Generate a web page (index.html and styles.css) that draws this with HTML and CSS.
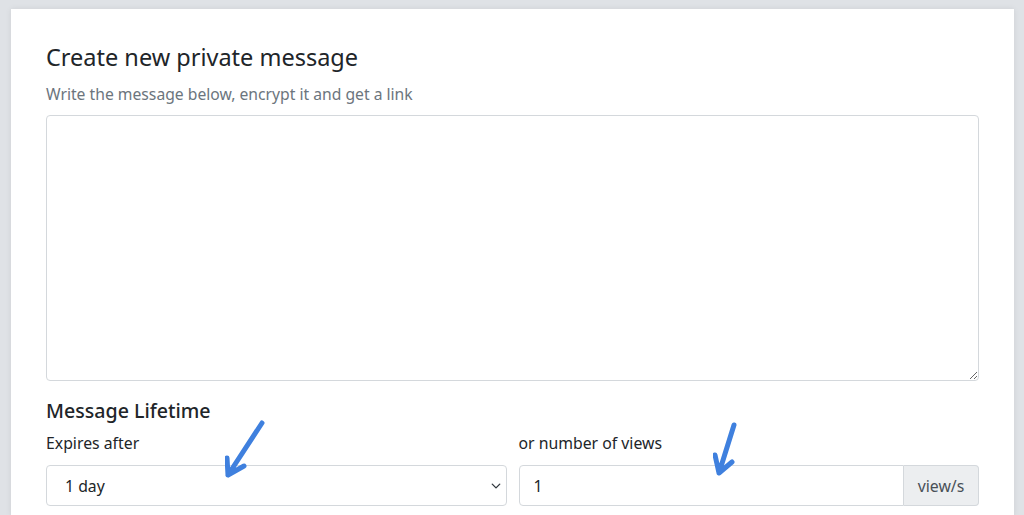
FILE: index.html
```html
<!DOCTYPE html>
<html lang="en">
<head>
    <meta charset="UTF-8">
    <meta name="viewport" content="width=device-width, initial-scale=1.0">
    <title>Create new private message</title>
    <link rel="stylesheet" href="styles.css">
</head>
<body>
    <div class="card">
        <h1>Create new private message</h1>
        <p class="lead">Write the message below, encrypt it and get a link</p>

        <textarea class="message" aria-label="Message"></textarea>

        <h2>Message Lifetime</h2>
        <div class="row">
            <div class="form-group">
                <label for="expires">Expires after</label>
                <div class="field">
                    <select id="expires">
                        <option>1 day</option>
                        <option>1 hour</option>
                        <option>1 week</option>
                    </select>
                    <svg class="arrow arrow-left" width="40" height="60" viewBox="0 0 40 60">
                        <path d="M37 3 L3 55 M2 38 L3 55 L19 46" fill="none" stroke="#3f80de" stroke-width="5" stroke-linecap="round" stroke-linejoin="round"/>
                    </svg>
                </div>
            </div>
            <div class="form-group">
                <label for="views">or number of views</label>
                <div class="field input-group">
                    <input type="number" id="views" value="1">
                    <span class="addon">view/s</span>
                    <svg class="arrow arrow-right" width="30" height="56" viewBox="0 0 30 56">
                        <path d="M21 3 L6 51 M2 33 L6 51 L19 40" fill="none" stroke="#3f80de" stroke-width="5" stroke-linecap="round" stroke-linejoin="round"/>
                    </svg>
                </div>
            </div>
        </div>
    </div>
</body>
</html>
```

FILE: styles.css
```css
html, body {
    overflow: hidden;
}
body {
    font-family: "Noto Sans", "Open Sans", sans-serif;
    margin: 0;
    padding: 9px 10px 0 11px;
    background-color: #dfe2e6;
    color: #212529;
}
.card {
    background-color: #fff;
    padding: 30px 35px 10px 35px;
    box-shadow: 0 0 6px rgba(0, 0, 0, 0.08);
}
h1 {
    font-size: 23.5px;
    font-weight: 400;
    margin: 0;
    line-height: 36px;
}
.lead {
    font-size: 15.7px;
    color: #6c757d;
    margin: 7px 0 9px;
    line-height: 24px;
}
.message {
    display: block;
    width: 100%;
    height: 266px;
    box-sizing: border-box;
    border: 1px solid #d4d8dc;
    border-radius: 4px;
    resize: vertical;
    margin: 0;
}
h2 {
    font-size: 19.6px;
    font-weight: 500;
    margin: 16px 0 0;
    line-height: 28px;
}
.row {
    display: flex;
    gap: 12px;
    margin-top: 7px;
}
.form-group {
    flex: 1;
}
label {
    display: block;
    font-size: 15.8px;
    line-height: 22px;
    margin-bottom: 11px;
}
.field {
    position: relative;
}
select, input {
    width: 100%;
    height: 41px;
    box-sizing: border-box;
    border: 1px solid #d4d8dc;
    border-radius: 4px;
    font-family: inherit;
    font-size: 15.8px;
    color: #212529;
    background-color: #fff;
    padding: 0 18px;
    margin: 0;
}
select {
    appearance: none;
    background-image: url("data:image/svg+xml,%3csvg xmlns='http://www.w3.org/2000/svg' viewBox='0 0 16 16'%3e%3cpath fill='none' stroke='%23343a40' stroke-linecap='round' stroke-linejoin='round' stroke-width='2.2' d='M2 5l6 6 6-6'/%3e%3c/svg%3e");
    background-repeat: no-repeat;
    background-position: right 4px center;
    background-size: 12px 10px;
}
.input-group {
    display: flex;
}
.input-group input {
    flex: 1;
    width: auto;
    border-radius: 4px 0 0 4px;
    padding: 0 14px;
    -moz-appearance: textfield;
}
.input-group input::-webkit-inner-spin-button,
.input-group input::-webkit-outer-spin-button {
    -webkit-appearance: none;
}
.addon {
    display: flex;
    align-items: center;
    padding: 0 12px;
    width: 75px;
    box-sizing: border-box;
    justify-content: center;
    font-size: 15.8px;
    color: #495057;
    background-color: #eceef0;
    border: 1px solid #d4d8dc;
    border-left: none;
    border-radius: 0 4px 4px 0;
}
.arrow {
    position: absolute;
    pointer-events: none;
}
.arrow-left {
    left: 179px;
    top: -45px;
}
.arrow-right {
    left: 194px;
    top: -43px;
}
```
